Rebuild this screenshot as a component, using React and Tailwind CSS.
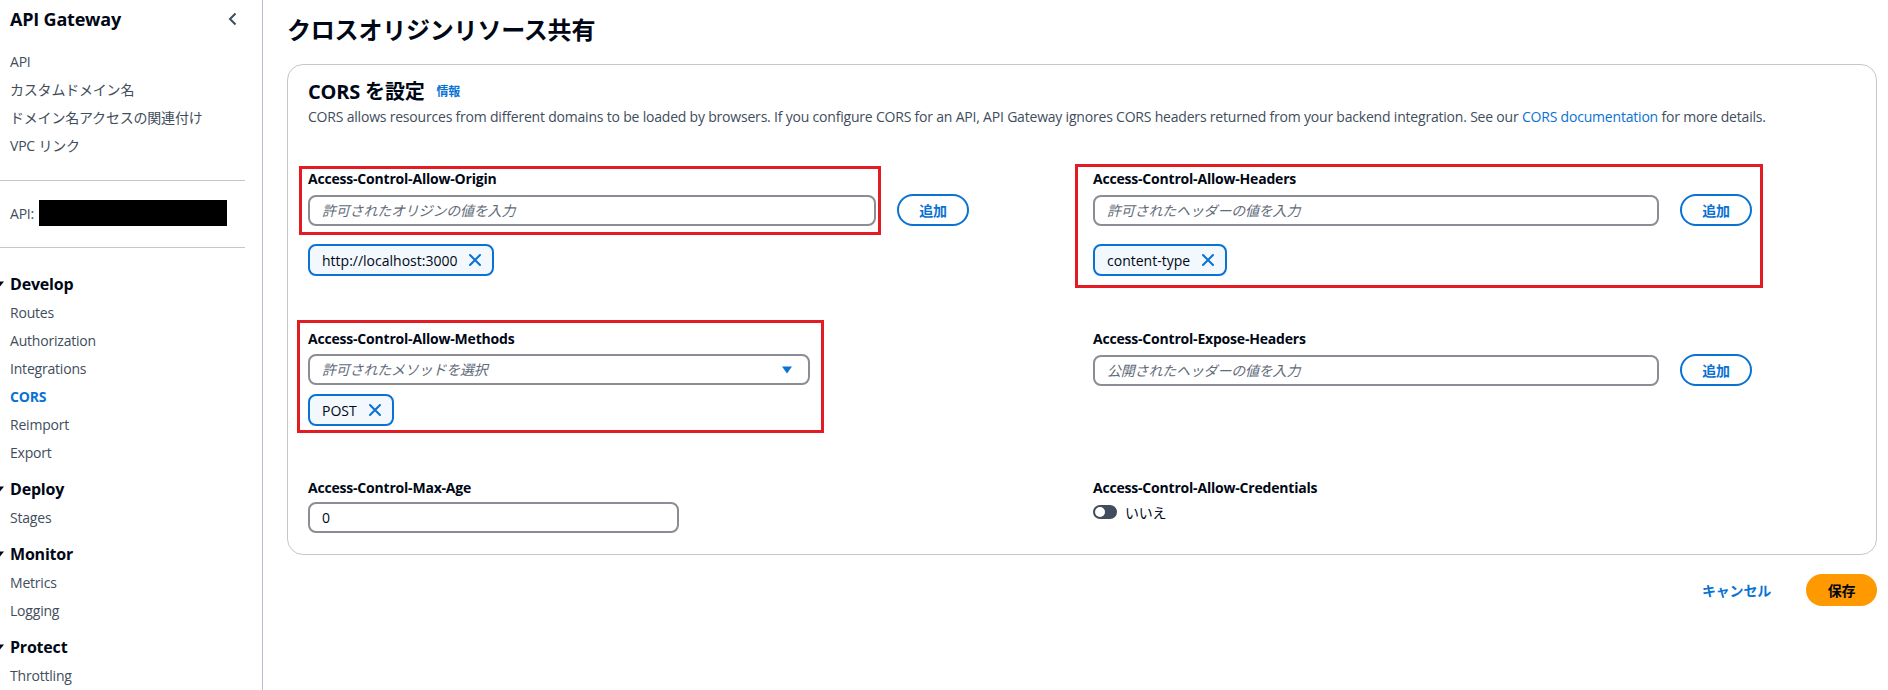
import React from "react";

const XIcon = () => (
  <svg width="14" height="14" viewBox="0 0 14 14" fill="none">
    <path d="M2 2L12 12M12 2L2 12" stroke="#0972d3" strokeWidth="2" strokeLinecap="round" />
  </svg>
);

const Token = ({ label }) => (
  <div className="inline-flex items-center h-[32px] pl-[12px] pr-[10px] gap-[11px] border-2 border-[#0972d3] bg-[#f2f8fd] rounded-[8px] text-[14px] tracking-normal text-[#000716]">
    <span>{label}</span>
    <XIcon />
  </div>
);

const Label = ({ children }) => (
  <div className="text-[14px] leading-[20px] font-bold text-[#000716]">{children}</div>
);

const TextInput = ({ placeholder, className = "" }) => (
  <input
    readOnly
    placeholder={placeholder}
    className={
      "h-[31px] border-2 border-[#8c8c94] rounded-[8px] px-[12px] text-[14px] text-[#000716] outline-none placeholder:italic placeholder:text-[#5f6b7a] bg-white " +
      className
    }
  />
);

const AddButton = () => (
  <button className="h-[32px] w-[72px] shrink-0 rounded-full border-2 border-[#0972d3] text-[#0972d3] font-bold text-[14px] flex items-center justify-center">
    追加
  </button>
);

const NavItem = ({ children, active }) => (
  <div
    className={
      "h-[28px] flex items-center text-[14px] " +
      (active ? "text-[#0972d3] font-bold" : "text-[#414d5c]")
    }
  >
    {children}
  </div>
);

const SectionHead = ({ children, className = "" }) => (
  <div className={"h-[28px] flex items-center gap-[6px] " + className}>
    <svg width="8" height="8" viewBox="0 0 8 8" className="-ml-[14px]">
      <path d="M0 1.5L4 6.5L8 1.5Z" fill="#000716" />
    </svg>
    <span className="text-[16px] font-bold text-[#000716]">{children}</span>
  </div>
);

export default function App() {
  return (
    <div className="relative w-[1888px] h-[690px] overflow-hidden bg-white flex font-['Open_Sans','Noto_Sans_CJK_JP',sans-serif] tracking-[-0.2px] text-[#000716]">
      {/* Sidebar */}
      <aside className="w-[263px] shrink-0 border-r border-[#b6bec9] pl-[10px] flex flex-col">
        <div className="h-[24px] mt-[7px] flex items-center justify-between pr-[24px]">
          <span className="text-[18px] font-bold text-[#000716]">API Gateway</span>
          <svg width="10" height="14" viewBox="0 0 10 14" fill="none">
            <path d="M7.5 1.5L2 7L7.5 12.5" stroke="#414d5c" strokeWidth="2" />
          </svg>
        </div>
        <div className="mt-[16px]">
          <NavItem>API</NavItem>
          <NavItem>カスタムドメイン名</NavItem>
          <NavItem>ドメイン名アクセスの関連付け</NavItem>
          <NavItem>VPC リンク</NavItem>
        </div>
        <div className="mt-[21px] -ml-[10px] mr-[17px] border-t border-[#c6c6cd]" />
        <div className="mt-[19px] h-[26px] flex items-center text-[14px] text-[#414d5c]">
          <span>API:</span>
          <div className="ml-[5px] w-[188px] h-[26px] bg-black" />
        </div>
        <div className="mt-[21px] -ml-[10px] mr-[17px] border-t border-[#c6c6cd]" />
        <SectionHead className="mt-[22px]">Develop</SectionHead>
        <NavItem>Routes</NavItem>
        <NavItem>Authorization</NavItem>
        <NavItem>Integrations</NavItem>
        <NavItem active>CORS</NavItem>
        <NavItem>Reimport</NavItem>
        <NavItem>Export</NavItem>
        <SectionHead className="mt-[9px]">Deploy</SectionHead>
        <NavItem>Stages</NavItem>
        <SectionHead className="mt-[9px]">Monitor</SectionHead>
        <NavItem>Metrics</NavItem>
        <NavItem>Logging</NavItem>
        <SectionHead className="mt-[9px]">Protect</SectionHead>
        <NavItem>Throttling</NavItem>
      </aside>

      {/* Main */}
      <main className="flex-1 pl-[24px] pr-[11px] pt-[14px]">
        <h1 className="text-[24px] leading-[32px] font-bold text-[#000716]">クロスオリジンリソース共有</h1>

        <section className="mt-[18px] border border-[#c6c6cd] rounded-[16px] pl-[20px] pt-[13px] pb-[21px]">
          <div className="h-[28px] flex items-center gap-[12px]">
            <span className="text-[20px] font-bold text-[#000716]">CORS を設定</span>
            <span className="text-[12px] font-bold text-[#0972d3]">情報</span>
          </div>
          <p className="mt-[1px] text-[14px] leading-[20px] text-[#414d5c]">
            CORS allows resources from different domains to be loaded by browsers. If you configure CORS for an API, API Gateway ignores CORS headers returned from your backend integration. See our{" "}
            <span className="text-[#0972d3]">CORS documentation</span> for more details.
          </p>

          {/* Row 1 */}
          <div className="mt-[42px] grid grid-cols-[764px_764px] gap-x-[21px]">
            <div>
              <Label>Access-Control-Allow-Origin</Label>
              <div className="mt-[5px] w-[661px] flex items-center gap-[21px]">
                <TextInput placeholder="許可されたオリジンの値を入力" className="flex-1 min-w-0" />
                <AddButton />
              </div>
              <div className="mt-[18px]">
                <Token label="http://localhost:3000" />
              </div>
            </div>
            <div>
              <Label>Access-Control-Allow-Headers</Label>
              <div className="mt-[5px] w-[659px] flex items-center gap-[21px]">
                <TextInput placeholder="許可されたヘッダーの値を入力" className="flex-1 min-w-0" />
                <AddButton />
              </div>
              <div className="mt-[18px]">
                <Token label="content-type" />
              </div>
            </div>
          </div>

          {/* Row 2 */}
          <div className="mt-[53px] grid grid-cols-[764px_764px] gap-x-[21px]">
            <div>
              <Label>Access-Control-Allow-Methods</Label>
              <div className="mt-[5px] w-[502px] h-[31px] border-2 border-[#8c8c94] rounded-[8px] pl-[12px] pr-[16px] flex items-center justify-between">
                <span className="text-[14px] italic text-[#5f6b7a]">許可されたメソッドを選択</span>
                <svg width="10" height="8" viewBox="0 0 10 8">
                  <path d="M0 0.5H10L5 7.5Z" fill="#0972d3" />
                </svg>
              </div>
              <div className="mt-[9px]">
                <Token label="POST" />
              </div>
            </div>
            <div>
              <Label>Access-Control-Expose-Headers</Label>
              <div className="mt-[5px] w-[659px] flex items-center gap-[21px]">
                <TextInput placeholder="公開されたヘッダーの値を入力" className="flex-1 min-w-0" />
                <AddButton />
              </div>
            </div>
          </div>

          {/* Row 3 */}
          <div className="mt-[52px] grid grid-cols-[764px_764px] gap-x-[21px]">
            <div>
              <Label>Access-Control-Max-Age</Label>
              <input
                readOnly
                defaultValue="0"
                className="mt-[4px] block w-[371px] h-[31px] border-2 border-[#8c8c94] rounded-[8px] px-[12px] text-[14px] text-[#000716] outline-none"
              />
            </div>
            <div>
              <Label>Access-Control-Allow-Credentials</Label>
              <div className="mt-[4px] h-[20px] flex items-center gap-[8px]">
                <div className="w-[24px] h-[14px] rounded-full bg-[#414d5c] flex items-center pl-[2px]">
                  <div className="w-[10px] h-[10px] rounded-full bg-white" />
                </div>
                <span className="text-[14px] text-[#000716]">いいえ</span>
              </div>
            </div>
          </div>
        </section>

        <div className="mt-[19px] flex items-center justify-end">
          <span className="text-[14px] font-bold text-[#0972d3] mr-[35px]">キャンセル</span>
          <button className="w-[71px] h-[32px] rounded-full bg-[#ff9900] text-[14px] font-bold text-[#000716] flex items-center justify-center">
            保存
          </button>
        </div>
      </main>

      {/* Annotation boxes */}
      <div className="absolute left-[299px] top-[166px] w-[582px] h-[69px] border-[3px] border-[#e31b23] pointer-events-none" />
      <div className="absolute left-[1075px] top-[164px] w-[688px] h-[124px] border-[3px] border-[#e31b23] pointer-events-none" />
      <div className="absolute left-[297px] top-[320px] w-[527px] h-[113px] border-[3px] border-[#e31b23] pointer-events-none" />
    </div>
  );
}
